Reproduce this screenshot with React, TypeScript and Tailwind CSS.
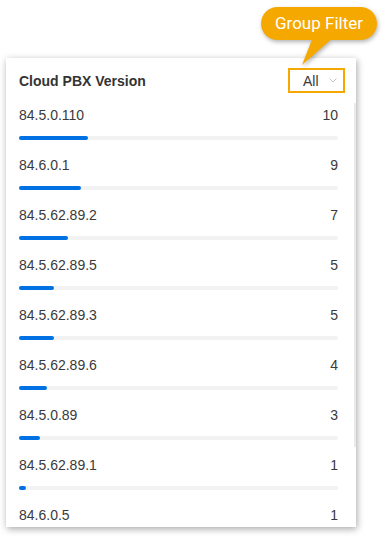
import React from "react";

const rows: { label: string; value: number }[] = [
  { label: "84.5.0.110", value: 10 },
  { label: "84.6.0.1", value: 9 },
  { label: "84.5.62.89.2", value: 7 },
  { label: "84.5.62.89.5", value: 5 },
  { label: "84.5.62.89.3", value: 5 },
  { label: "84.5.62.89.6", value: 4 },
  { label: "84.5.0.89", value: 3 },
  { label: "84.5.62.89.1", value: 1 },
  { label: "84.6.0.5", value: 1 },
];

const TOTAL = 46;

export default function App() {
  return (
    <div
      className="relative w-[386px] h-[536px] bg-white overflow-hidden pt-[58px] pl-[6px]"
      style={{ fontFamily: '"Liberation Sans", Arial, sans-serif' }}
    >
      <div className="relative w-[350px] h-[469px] bg-white shadow-[1px_2px_7px_rgba(0,0,0,0.35)] overflow-hidden flex flex-col">
        <div className="flex items-center justify-between pl-[13px] pr-[11px] pt-[10px]">
          <span className="text-[14px] font-bold text-[#333] leading-[20px]">Cloud PBX Version</span>
          <div className="w-[57px] h-[25px] border-2 border-[#f5a800] flex items-center pl-[13px] pr-[5px] justify-between">
            <span className="text-[14px] text-[#3a3a3a] leading-[20px]">All</span>
            <svg width="8" height="5" viewBox="0 0 8 5" className="mr-[1px]">
              <path d="M0.5 0.5 L4 4 L7.5 0.5" fill="none" stroke="#c4c4c4" strokeWidth="1" />
            </svg>
          </div>
        </div>
        <div className="flex flex-col pl-[13px] pr-[18px] pt-[12px]">
          {rows.map((r) => (
            <div key={r.label} className="flex flex-col pb-[15px]">
              <div className="flex justify-between text-[14px] leading-[20px] text-[#3a3a3a]">
                <span>{r.label}</span>
                <span>{r.value}</span>
              </div>
              <div className="mt-[11px] h-[4px] rounded-full bg-[#f2f2f2] relative">
                <div
                  className="h-[4px] rounded-full bg-[#0071e3]"
                  style={{ width: `${(r.value / TOTAL) * 100}%` }}
                />
              </div>
            </div>
          ))}
        </div>
        <div className="absolute left-[348px] top-[45px] w-[2px] h-[344px] bg-[#ebebeb]" />
      </div>

      {/* Callout */}
      <div className="absolute left-[255px] top-[4px] w-[128px] h-[66px]">
        <svg
          width="128"
          height="66"
          viewBox="0 0 128 66"
          className="absolute left-0 top-0 drop-shadow-[1px_2px_2px_rgba(0,0,0,0.3)]"
        >
          <rect x="6" y="3" width="116" height="33" rx="16.5" fill="#f5a800" />
          <path d="M58 33 L79 33 L47 61 Z" fill="#f5a800" />
        </svg>
        <div
          className="absolute left-[6px] top-[3px] w-[116px] h-[33px] flex items-center justify-center text-white text-[17px]"
          style={{ fontFamily: "Roboto, sans-serif" }}
        >
          Group Filter
        </div>
      </div>
    </div>
  );
}
